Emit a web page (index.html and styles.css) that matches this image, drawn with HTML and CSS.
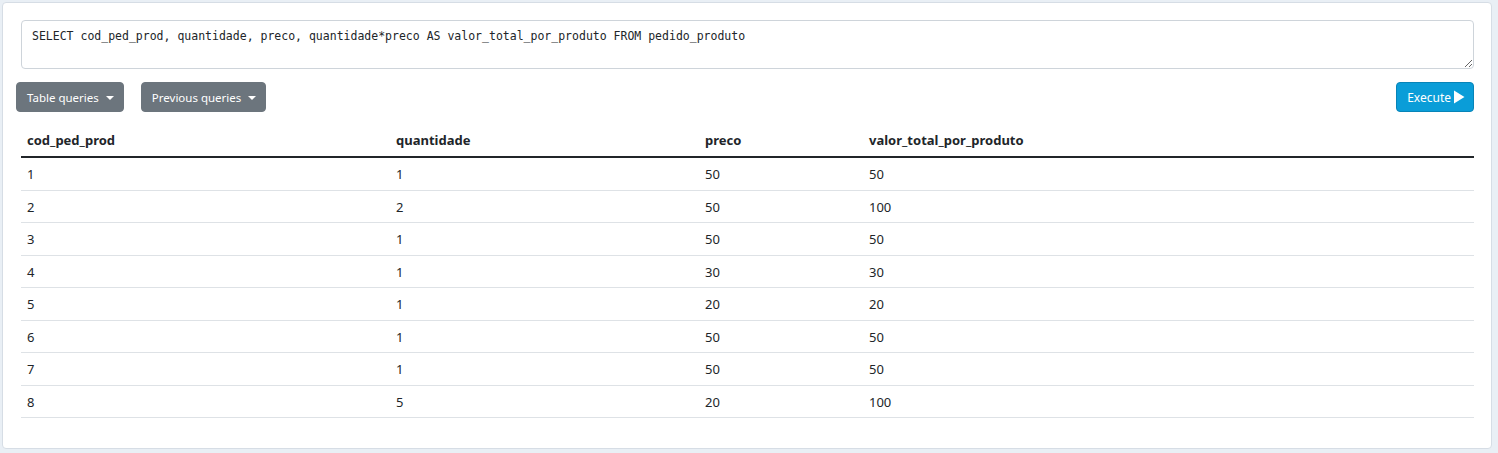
FILE: index.html
```html
<!DOCTYPE html>
<html>
<head>
<meta charset="utf-8">
<link rel="stylesheet" href="styles.css">
</head>
<body>
<div class="card">
  <textarea class="query" spellcheck="false">SELECT cod_ped_prod, quantidade, preco, quantidade*preco AS valor_total_por_produto FROM pedido_produto</textarea>
  <div class="toolbar">
    <button class="btn btn-grey">Table queries<span class="caret"></span></button>
    <button class="btn btn-grey">Previous queries<span class="caret"></span></button>
    <span class="spacer"></span>
    <button class="btn btn-blue">Execute<svg class="play" width="12" height="14" viewBox="0 0 12 14"><path d="M1 0.5 L11.5 7 L1 13.5 Z" fill="#fff"/></svg></button>
  </div>
  <table class="results">
    <thead>
      <tr><th class="c1">cod_ped_prod</th><th class="c2">quantidade</th><th class="c3">preco</th><th>valor_total_por_produto</th></tr>
    </thead>
    <tbody>
      <tr><td>1</td><td>1</td><td>50</td><td>50</td></tr>
      <tr><td>2</td><td>2</td><td>50</td><td>100</td></tr>
      <tr><td>3</td><td>1</td><td>50</td><td>50</td></tr>
      <tr><td>4</td><td>1</td><td>30</td><td>30</td></tr>
      <tr><td>5</td><td>1</td><td>20</td><td>20</td></tr>
      <tr><td>6</td><td>1</td><td>50</td><td>50</td></tr>
      <tr><td>7</td><td>1</td><td>50</td><td>50</td></tr>
      <tr><td>8</td><td>5</td><td>20</td><td>100</td></tr>
    </tbody>
  </table>
</div>
</body>
</html>
```
FILE: styles.css
```css
html, body {
  margin: 0;
  padding: 0;
}
body {
  background: #e9eff5;
  font-family: "Noto Sans", "Open Sans", sans-serif;
  font-size: 12px;
  color: #212529;
  padding: 2px 6px 4px 2px;
}
.card {
  background: #fff;
  border: 1px solid #d6dde5;
  border-radius: 4px;
  padding: 17px 17px 30px 18px;
}
.query {
  display: block;
  box-sizing: border-box;
  width: 100%;
  height: 49px;
  margin: 0;
  border: 1px solid #ced4da;
  border-radius: 4px;
  padding: 7px 10px;
  font-family: "DejaVu Sans Mono", "Liberation Mono", monospace;
  font-size: 11.5px;
  line-height: 16px;
  color: #212529;
  resize: vertical;
}
.toolbar {
  display: flex;
  align-items: center;
  margin: 13px 0 0 -5px;
  gap: 17px;
}
.spacer {
  flex: 1;
}
.btn {
  height: 30px;
  box-sizing: border-box;
  border-radius: 4px;
  font-family: inherit;
  font-size: 11.5px;
  color: #fff;
  display: inline-flex;
  align-items: center;
  padding: 0 10px 0 10px;
  cursor: pointer;
}
.btn-grey {
  background: #6c757d;
  border: 1px solid #6c757d;
  padding-right: 9px;
}
.btn-blue {
  background: #0a9dd8;
  border: 1px solid #0784b8;
  padding: 0 8px 0 10px;
  font-size: 12px;
}
.caret {
  display: inline-block;
  margin-left: 7px;
  width: 0;
  height: 0;
  border-top: 4px solid #fff;
  border-left: 4px solid transparent;
  border-right: 4px solid transparent;
  margin-top: 1px;
}
.play {
  margin-left: 2px;
}
.results {
  width: 100%;
  border-collapse: collapse;
  margin-top: 13px;
  font-size: 13px;
}
.results th, .results td {
  text-align: left;
  padding: 7px 6px;
  line-height: 17.43px;
}
.results td {
  padding-top: 8px;
  padding-bottom: 6px;
}
.results th {
  font-weight: 700;
  border-bottom: 2px solid #212529;
}
.results td {
  border-bottom: 1px solid #dee2e6;
}
.c1 { width: 357px; }
.c2 { width: 297px; }
.c3 { width: 152px; }
```
